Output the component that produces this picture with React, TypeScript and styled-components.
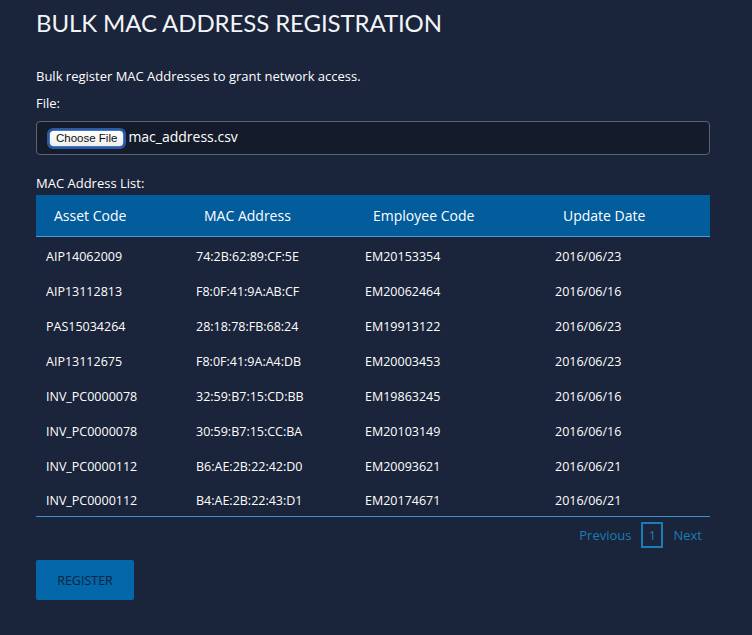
import styled, { createGlobalStyle } from 'styled-components';

const GlobalStyle = createGlobalStyle`
  html, body {
    margin: 0;
    padding: 0;
    background-color: #1a243a;
  }
  body {
    font-family: 'Open Sans', 'Liberation Sans', sans-serif;
    color: #ffffff;
  }
`;

const rows = [
  ['AIP14062009', '74:2B:62:89:CF:5E', 'EM20153354', '2016/06/23'],
  ['AIP13112813', 'F8:0F:41:9A:AB:CF', 'EM20062464', '2016/06/16'],
  ['PAS15034264', '28:18:78:FB:68:24', 'EM19913122', '2016/06/23'],
  ['AIP13112675', 'F8:0F:41:9A:A4:DB', 'EM20003453', '2016/06/23'],
  ['INV_PC0000078', '32:59:B7:15:CD:BB', 'EM19863245', '2016/06/16'],
  ['INV_PC0000078', '30:59:B7:15:CC:BA', 'EM20103149', '2016/06/16'],
  ['INV_PC0000112', 'B6:AE:2B:22:42:D0', 'EM20093621', '2016/06/21'],
  ['INV_PC0000112', 'B4:AE:2B:22:43:D1', 'EM20174671', '2016/06/21'],
];

const Page = styled.div`
  width: 752px;
  height: 635px;
  box-sizing: border-box;
  padding: 8px 42px 0 36px;
  background-color: #1a243a;
`;

const Title = styled.h1`
  margin: 0;
  font-family: 'Lato', sans-serif;
  font-weight: 400;
  font-size: 24px;
  letter-spacing: -0.1px;
  line-height: 30px;
  color: #f2f4f7;
`;

const Intro = styled.p`
  margin: 29px 0 0;
  font-size: 13px;
  line-height: 18px;
  color: #ffffff;
`;

const Label = styled.div`
  margin-top: ${(p: { $top: number }) => p.$top}px;
  font-size: 13px;
  line-height: 18px;
  color: #ffffff;
`;

const FileBox = styled.div`
  display: flex;
  align-items: center;
  gap: 4px;
  margin-top: 9px;
  height: 34px;
  box-sizing: border-box;
  padding: 0 12px;
  border: 1px solid #5b6474;
  border-radius: 4px;
  background-color: #141b2a;
`;

const ChooseButton = styled.span`
  display: inline-block;
  padding: 1px 6px;
  margin-top: 1px;
  font-family: 'Liberation Sans', sans-serif;
  font-size: 11.5px;
  line-height: 13px;
  color: #111;
  background: linear-gradient(#ffffff, #eeeeee);
  border: 1px solid #4a78c0;
  border-radius: 4px;
  box-shadow: 0 0 0 2px #2a5aa6;
`;

const FileName = styled.span`
  font-size: 14px;
  color: #ffffff;
  margin-top: -4px;
`;

const Table = styled.table`
  width: 100%;
  margin-top: 3px;
  border-collapse: collapse;
  table-layout: fixed;
  border-bottom: 1px solid #3d8fd0;
`;

const HeadCell = styled.th`
  height: 41px;
  padding: 0 0 0 18px;
  text-align: left;
  font-weight: 400;
  font-size: 14px;
  color: #ffffff;
  background-color: #035c9c;
  border-bottom: 1px solid #4c9ad6;
`;

const Cell = styled.td`
  height: 35px;
  padding: 4px 0 0 10px;
  box-sizing: border-box;
  font-size: 12.5px;
  color: #ffffff;
  vertical-align: middle;
`;

const Pager = styled.div`
  display: flex;
  justify-content: flex-end;
  align-items: center;
  gap: 10px;
  margin-top: 5px;
  padding-right: 8px;
  font-size: 13px;
  color: #1a7db6;
`;

const PageBox = styled.span`
  display: flex;
  align-items: center;
  justify-content: center;
  width: 18px;
  height: 22px;
  border: 2px solid #1a7db6;
`;

const RegisterButton = styled.button`
  margin-top: 12px;
  width: 98px;
  height: 40px;
  border: none;
  border-radius: 2px;
  background-color: #0467a9;
  color: #0d2440;
  font-family: 'Open Sans', sans-serif;
  font-size: 12.5px;
  cursor: pointer;
`;

const widths = [150, 169, 190, 165];

export default function App() {
  return (
    <>
      <GlobalStyle />
      <Page>
        <Title>BULK MAC ADDRESS REGISTRATION</Title>
        <Intro>Bulk register MAC Addresses to grant network access.</Intro>
        <Label $top={9}>File:</Label>
        <FileBox>
          <ChooseButton>Choose File</ChooseButton>
          <FileName>mac_address.csv</FileName>
        </FileBox>
        <Label $top={19}>MAC Address List:</Label>
        <Table>
          <colgroup>
            {widths.map((w, i) => (
              <col key={i} style={{ width: w }} />
            ))}
          </colgroup>
          <thead>
            <tr>
              <HeadCell>Asset Code</HeadCell>
              <HeadCell>MAC Address</HeadCell>
              <HeadCell>Employee Code</HeadCell>
              <HeadCell>Update Date</HeadCell>
            </tr>
          </thead>
          <tbody>
            {rows.map((r, i) => (
              <tr key={i}>
                {r.map((c, j) => (
                  <Cell key={j}>{c}</Cell>
                ))}
              </tr>
            ))}
          </tbody>
        </Table>
        <Pager>
          <span>Previous</span>
          <PageBox>1</PageBox>
          <span>Next</span>
        </Pager>
        <RegisterButton>REGISTER</RegisterButton>
      </Page>
    </>
  );
}
